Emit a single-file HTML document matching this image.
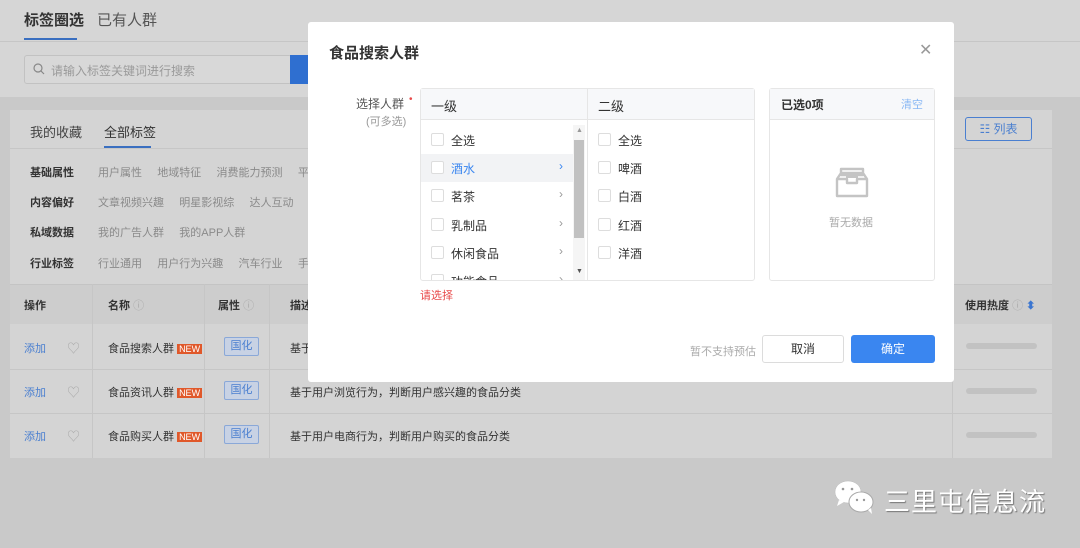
<!DOCTYPE html>
<html><head><meta charset="utf-8"><style>
*{margin:0;padding:0;box-sizing:border-box}
body{width:1080px;height:548px;overflow:hidden;background:#c9c9c9;font-family:"Liberation Sans","Noto Sans CJK SC",sans-serif;font-size:12px;color:#333;position:relative}
.a{position:absolute;white-space:nowrap}
.g{color:#8a8a8a}
.b{font-weight:bold;color:#333}
</style></head><body>
<!-- top header -->
<div class="a" style="left:0;top:0;width:1080px;height:42px;background:#d6d6d6;border-bottom:1px solid #c6c6c6"></div>
<div class="a" style="left:24px;top:9px;font-size:15px;color:#333;font-weight:bold">标签圈选</div>
<div class="a" style="left:24px;top:38px;width:53px;height:2px;background:#3a6fc0"></div>
<div class="a" style="left:97px;top:9px;font-size:15px;color:#555">已有人群</div>
<div class="a" style="left:0;top:42px;width:1080px;height:55px;background:#d6d6d6"></div>
<div class="a" style="left:24px;top:55px;width:268px;height:29px;border:1px solid #c2c2c2;border-radius:3px;background:#d8d8d8"></div>
<div class="a" style="left:290px;top:55px;width:30px;height:29px;background:#2f6fd0"></div>
<svg class="a" style="left:33px;top:63px" width="12" height="12"><circle cx="5" cy="5" r="4" fill="none" stroke="#888" stroke-width="1.2"/><path d="M8 8l3 3" stroke="#888" stroke-width="1.2"/></svg>
<div class="a" style="left:51px;top:62px;color:#9a9a9a">请输入标签关键词进行搜索</div>
<!-- card -->
<div class="a" style="left:10px;top:110px;width:1042px;height:348px;background:#d4d4d4"></div>
<div class="a" style="left:30px;top:122px;font-size:13px;color:#444">我的收藏</div>
<div class="a" style="left:104px;top:122px;font-size:13px;color:#333">全部标签</div>
<div class="a" style="left:104px;top:146px;width:47px;height:2px;background:#3a6fc0"></div>
<div class="a" style="left:10px;top:148px;width:1042px;height:1px;background:#c6c6c6"></div>
<div class="a" style="left:965px;top:117px;width:67px;height:24px;border:1px solid #4a7fd0;border-radius:3px;color:#4a7fd0;text-align:center;line-height:22px">☷ 列表</div>
<div class="a b" style="left:30px;top:164px;font-size:11px">基础属性</div>
<div class="a g" style="left:98px;top:164px;font-size:11px;word-spacing:0">用户属性 &nbsp;&nbsp;&nbsp;&nbsp;地域特征 &nbsp;&nbsp;&nbsp;&nbsp;消费能力预测 &nbsp;&nbsp;&nbsp;&nbsp;平</div>
<div class="a b" style="left:30px;top:194px;font-size:11px">内容偏好</div>
<div class="a g" style="left:98px;top:194px;font-size:11px">文章视频兴趣 &nbsp;&nbsp;&nbsp;&nbsp;明星影视综 &nbsp;&nbsp;&nbsp;&nbsp;达人互动</div>
<div class="a b" style="left:30px;top:224px;font-size:11px">私域数据</div>
<div class="a g" style="left:98px;top:224px;font-size:11px">我的广告人群 &nbsp;&nbsp;&nbsp;&nbsp;我的APP人群</div>
<div class="a b" style="left:30px;top:255px;font-size:11px">行业标签</div>
<div class="a g" style="left:98px;top:255px;font-size:11px">行业通用 &nbsp;&nbsp;&nbsp;&nbsp;用户行为兴趣 &nbsp;&nbsp;&nbsp;&nbsp;汽车行业 &nbsp;&nbsp;&nbsp;&nbsp;手</div>
<!-- table -->
<div class="a" style="left:10px;top:284px;width:1042px;height:40px;background:#cdcdcd;border-top:1px solid #c4c4c4"></div>
<div class="a b" style="left:24px;top:297px;font-size:11px">操作</div>
<div class="a b" style="left:108px;top:297px;font-size:11px">名称 <span style="color:#aaa;font-weight:normal">ⓘ</span></div>
<div class="a b" style="left:218px;top:297px;font-size:11px">属性 <span style="color:#aaa;font-weight:normal">ⓘ</span></div>
<div class="a b" style="left:290px;top:297px;font-size:11px">描述</div>
<div class="a b" style="left:965px;top:297px;font-size:11px">使用热度 <span style="color:#aaa;font-weight:normal">ⓘ</span> <span style="color:#3a75d0">⬍</span></div>
<div class="a" style="left:92px;top:284px;width:1px;height:174px;background:#c6c6c6"></div>
<div class="a" style="left:204px;top:284px;width:1px;height:174px;background:#c6c6c6"></div>
<div class="a" style="left:269px;top:284px;width:1px;height:174px;background:#c6c6c6"></div>
<div class="a" style="left:952px;top:284px;width:1px;height:174px;background:#c6c6c6"></div>
<div class="a" style="left:10px;top:369px;width:1042px;height:1px;background:#c6c6c6"></div>
<div class="a" style="left:10px;top:413px;width:1042px;height:1px;background:#c6c6c6"></div>

<div class="a" style="left:24px;top:340px;color:#4a7fd0;font-size:11px">添加</div>
<div class="a" style="left:67px;top:338px;color:#aaa;font-size:13px">♡</div>
<div class="a" style="left:108px;top:340px;font-size:11px">食品搜索人群 <span style="background:#e0582a;color:#fff;font-size:9px;padding:0 2px">NEW</span></div>
<div class="a" style="left:224px;top:337px;width:35px;height:19px;border:1px solid #8aa8d8;background:#c8d2e4;color:#4a7fd0;font-size:11px;text-align:center;line-height:17px;border-radius:2px">国化</div>
<div class="a" style="left:290px;top:340px;font-size:11px">基于</div>

<div class="a" style="left:24px;top:384px;color:#4a7fd0;font-size:11px">添加</div>
<div class="a" style="left:67px;top:382px;color:#aaa;font-size:13px">♡</div>
<div class="a" style="left:108px;top:384px;font-size:11px">食品资讯人群 <span style="background:#e0582a;color:#fff;font-size:9px;padding:0 2px">NEW</span></div>
<div class="a" style="left:224px;top:381px;width:35px;height:19px;border:1px solid #8aa8d8;background:#c8d2e4;color:#4a7fd0;font-size:11px;text-align:center;line-height:17px;border-radius:2px">国化</div>
<div class="a" style="left:290px;top:384px;font-size:11px">基于用户浏览行为，判断用户感兴趣的食品分类</div>

<div class="a" style="left:24px;top:428px;color:#4a7fd0;font-size:11px">添加</div>
<div class="a" style="left:67px;top:426px;color:#aaa;font-size:13px">♡</div>
<div class="a" style="left:108px;top:428px;font-size:11px">食品购买人群 <span style="background:#e0582a;color:#fff;font-size:9px;padding:0 2px">NEW</span></div>
<div class="a" style="left:224px;top:425px;width:35px;height:19px;border:1px solid #8aa8d8;background:#c8d2e4;color:#4a7fd0;font-size:11px;text-align:center;line-height:17px;border-radius:2px">国化</div>
<div class="a" style="left:290px;top:428px;font-size:11px">基于用户电商行为，判断用户购买的食品分类</div>

<div class="a" style="left:966px;top:343px;width:71px;height:6px;border-radius:3px;background:#c2c2c2"></div>
<div class="a" style="left:966px;top:388px;width:71px;height:6px;border-radius:3px;background:#c2c2c2"></div>
<div class="a" style="left:966px;top:432px;width:71px;height:6px;border-radius:3px;background:#c2c2c2"></div>

<!-- modal -->
<div class="a" style="left:308px;top:22px;width:646px;height:360px;background:#fff;border-radius:3px"></div>
<div class="a" style="left:329px;top:42px;font-size:15px;font-weight:bold;color:#333">食品搜索人群</div>
<div class="a" style="left:919px;top:40px;font-size:16px;color:#999">✕</div>
<div class="a" style="left:356px;top:95px;color:#555">选择人群</div>
<div class="a" style="left:409px;top:94px;color:#e84a4a;font-size:10px">•</div>
<div class="a" style="left:366px;top:113px;color:#999;font-size:11px">(可多选)</div>

<div class="a" style="left:420px;top:88px;width:335px;height:193px;border:1px solid #e6e6e6;border-radius:3px"></div>
<div class="a" style="left:421px;top:89px;width:333px;height:31px;background:#f7f8fa;border-bottom:1px solid #e6e6e6"></div>
<div class="a" style="left:587px;top:89px;width:1px;height:191px;background:#e6e6e6"></div>
<div class="a" style="left:431px;top:96px;font-size:13px;color:#333">一级</div>
<div class="a" style="left:598px;top:96px;font-size:13px;color:#333">二级</div>
<div class="a" style="left:421px;top:154px;width:152px;height:28px;background:#f2f3f5"></div>
<div class="a" style="left:573px;top:125px;width:12px;height:155px;background:#f5f5f5"></div>
<div class="a" style="left:574px;top:140px;width:10px;height:98px;background:#c1c1c1"></div>
<div class="a" style="left:576px;top:127px;font-size:7px;color:#999">▲</div>
<div class="a" style="left:576px;top:268px;font-size:7px;color:#555">▼</div>
<div style="position:absolute;left:421px;top:120px;width:152px;height:160px;overflow:hidden">
<div class="a" style="left:10px;top:13px;width:13px;height:13px;border:1px solid #ddd;border-radius:2px"></div><div class="a" style="left:30px;top:12px">全选</div>
<div class="a" style="left:10px;top:41px;width:13px;height:13px;border:1px solid #ddd;border-radius:2px;background:#fff"></div><div class="a" style="left:30px;top:40px;color:#3a86f0">酒水</div><div class="a" style="left:138px;top:39px;color:#3a86f0">›</div>
<div class="a" style="left:10px;top:69px;width:13px;height:13px;border:1px solid #ddd;border-radius:2px"></div><div class="a" style="left:30px;top:68px">茗茶</div><div class="a" style="left:138px;top:67px;color:#999">›</div>
<div class="a" style="left:10px;top:98px;width:13px;height:13px;border:1px solid #ddd;border-radius:2px"></div><div class="a" style="left:30px;top:97px">乳制品</div><div class="a" style="left:138px;top:96px;color:#999">›</div>
<div class="a" style="left:10px;top:126px;width:13px;height:13px;border:1px solid #ddd;border-radius:2px"></div><div class="a" style="left:30px;top:125px">休闲食品</div><div class="a" style="left:138px;top:124px;color:#999">›</div>
<div class="a" style="left:10px;top:154px;width:13px;height:13px;border:1px solid #ddd;border-radius:2px"></div><div class="a" style="left:30px;top:153px">功能食品</div><div class="a" style="left:138px;top:152px;color:#999">›</div>
</div>
<div style="position:absolute;left:588px;top:120px;width:166px;height:160px">
<div class="a" style="left:10px;top:13px;width:13px;height:13px;border:1px solid #ddd;border-radius:2px"></div><div class="a" style="left:30px;top:12px">全选</div>
<div class="a" style="left:10px;top:41px;width:13px;height:13px;border:1px solid #ddd;border-radius:2px"></div><div class="a" style="left:30px;top:40px">啤酒</div>
<div class="a" style="left:10px;top:69px;width:13px;height:13px;border:1px solid #ddd;border-radius:2px"></div><div class="a" style="left:30px;top:68px">白酒</div>
<div class="a" style="left:10px;top:98px;width:13px;height:13px;border:1px solid #ddd;border-radius:2px"></div><div class="a" style="left:30px;top:97px">红酒</div>
<div class="a" style="left:10px;top:126px;width:13px;height:13px;border:1px solid #ddd;border-radius:2px"></div><div class="a" style="left:30px;top:125px">洋酒</div>
</div>

<div class="a" style="left:769px;top:88px;width:166px;height:193px;border:1px solid #e6e6e6;border-radius:3px"></div>
<div class="a" style="left:770px;top:89px;width:164px;height:31px;background:#f7f8fa;border-bottom:1px solid #e6e6e6"></div>
<div class="a" style="left:781px;top:96px;font-size:12px;font-weight:bold;color:#333">已选0项</div>
<div class="a" style="left:901px;top:96px;font-size:11px;color:#8ab8f4">清空</div>
<svg class="a" style="left:835px;top:167px" width="34" height="32" viewBox="0 0 34 32"><path d="M6 2h22v6H6z M2 12l4-6h22l4 6v17H2z M2 12h10v4h10v-4h10" fill="none" stroke="#c4c4c4" stroke-width="2.4" stroke-linejoin="round"/><path d="M11 10h12" stroke="#c4c4c4" stroke-width="2"/></svg>
<div class="a" style="left:829px;top:214px;font-size:11px;color:#aaa">暂无数据</div>

<div class="a" style="left:420px;top:287px;font-size:11px;color:#e84a4a">请选择</div>
<div class="a" style="left:690px;top:343px;font-size:11px;color:#aaa">暂不支持预估</div>
<div class="a" style="left:762px;top:335px;width:82px;height:28px;border:1px solid #dcdcdc;border-radius:3px;text-align:center;line-height:26px;color:#333">取消</div>
<div class="a" style="left:851px;top:335px;width:84px;height:28px;background:#3a86f0;border-radius:3px;text-align:center;line-height:28px;color:#fff">确定</div>

<!-- watermark -->
<svg class="a" style="left:833px;top:478px" width="44" height="38" viewBox="0 0 44 38"><ellipse cx="15" cy="14" rx="13" ry="11" fill="#fff" stroke="#bbb" stroke-width="0.5"/><path d="M6 22l-2 6 7-4z" fill="#fff"/><ellipse cx="28" cy="24" rx="12" ry="10" fill="#fff" stroke="#aaa" stroke-width="1"/><path d="M35 32l4 4-1-6z" fill="#fff"/><circle cx="10" cy="11" r="1.3" fill="#999"/><circle cx="19" cy="11" r="1.3" fill="#999"/><circle cx="24" cy="22" r="1.2" fill="#999"/><circle cx="31" cy="22" r="1.2" fill="#999"/></svg>
<div class="a" style="left:884px;top:482px;font-size:26px;color:#fff;text-shadow:1px 1px 1px #777;letter-spacing:1px">三里屯信息流</div>
</body></html>
